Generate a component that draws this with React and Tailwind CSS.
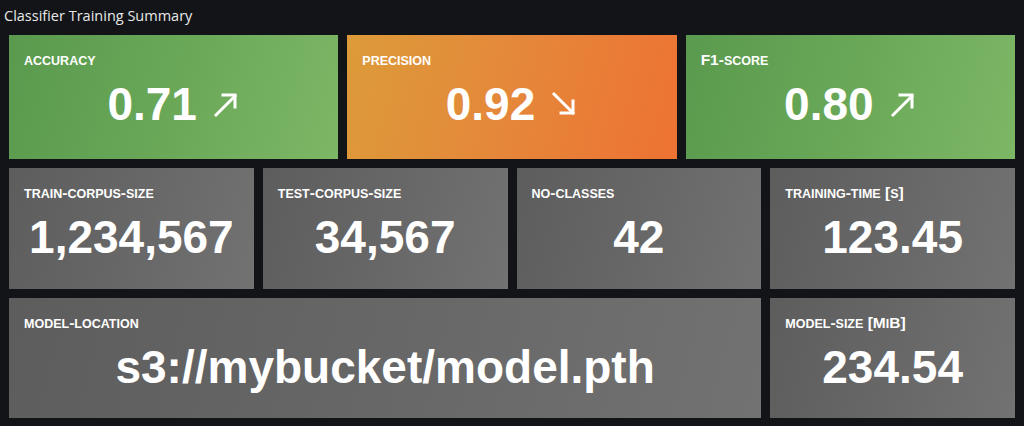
const green = "bg-[linear-gradient(105deg,#5a9a4e_0%,#6aa858_50%,#7cb765_100%)]";
const orange = "bg-[linear-gradient(105deg,#dc9b39_0%,#e5873a_50%,#ee7233_100%)]";
const gray = "bg-[linear-gradient(105deg,#5d5d5d_0%,#676767_50%,#727272_100%)]";

// lowercase letters render as small caps, everything else full size
function Label({ text }) {
  const parts = [];
  let buf = "";
  let small = null;
  for (const ch of text) {
    const isSmall = ch >= "a" && ch <= "z";
    if (small !== null && isSmall !== small) {
      parts.push({ s: buf, small });
      buf = "";
    }
    small = isSmall;
    buf += ch;
  }
  if (buf) parts.push({ s: buf, small });
  return (
    <div className="h-[16px] whitespace-nowrap font-bold leading-[16px] text-white">
      {parts.map((p, i) => (
        <span key={i} className={p.small ? "text-[12.5px] uppercase" : "text-[15.5px]"}>
          {p.s}
        </span>
      ))}
    </div>
  );
}

function ArrowUp() {
  return (
    <svg width="28" height="28" viewBox="0 0 28 28" fill="none" stroke="white" strokeWidth="3" strokeLinecap="square">
      <path d="M4 25 L23 6" />
      <path d="M11 5 H23 V17" />
    </svg>
  );
}

function ArrowDown() {
  return (
    <svg width="28" height="28" viewBox="0 0 28 28" fill="none" stroke="white" strokeWidth="3" strokeLinecap="square">
      <path d="M4 4 L23 23" />
      <path d="M23 11 V23 H11" />
    </svg>
  );
}

function Stat({ label, value, bg, arrow, span }) {
  return (
    <div className={`${span} ${bg} flex flex-col px-[15px] pt-[17px]`}>
      <Label text={label} />
      <div className="mt-[13px] flex items-center justify-center gap-[15px] whitespace-nowrap text-[46px] font-bold leading-none text-white">
        <span>{value}</span>
        {arrow === "up" && <ArrowUp />}
        {arrow === "down" && <ArrowDown />}
      </div>
    </div>
  );
}

export default function App() {
  return (
    <div
      className="flex h-[426px] w-[1024px] flex-col bg-[#131418]"
      style={{ fontFamily: '"Liberation Sans", Arial, sans-serif' }}
    >
      <div
        className="flex h-[35px] items-start px-[4px] pt-[5px] text-[14.5px] text-[#e8e8e8]"
        style={{ fontFamily: '"Open Sans", sans-serif' }}
      >
        Classifier Training Summary
      </div>
      <div className="grid grid-cols-12 grid-rows-[124px_121px_120px] gap-x-[9px] gap-y-[9px] px-[9px]">
        <Stat span="col-span-4" bg={green} label="accuracy" value="0.71" arrow="up" />
        <Stat span="col-span-4" bg={orange} label="precision" value="0.92" arrow="down" />
        <Stat span="col-span-4" bg={green} label="F1-score" value="0.80" arrow="up" />

        <Stat span="col-span-3" bg={gray} label="train-corpus-size" value="1,234,567" />
        <Stat span="col-span-3" bg={gray} label="test-corpus-size" value="34,567" />
        <Stat span="col-span-3" bg={gray} label="no-classes" value="42" />
        <Stat span="col-span-3" bg={gray} label="training-time [s]" value="123.45" />

        <Stat span="col-span-9" bg={gray} label="model-location" value="s3://mybucket/model.pth" />
        <Stat span="col-span-3" bg={gray} label="model-size [MiB]" value="234.54" />
      </div>
    </div>
  );
}
